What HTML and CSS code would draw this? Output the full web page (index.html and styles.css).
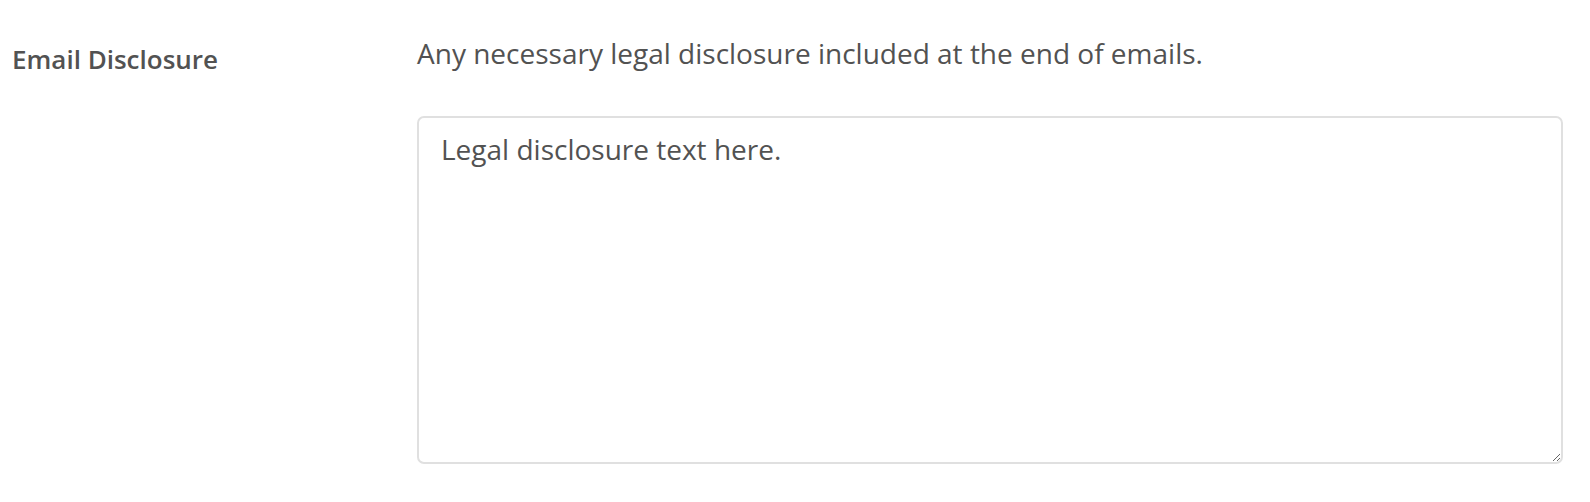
FILE: index.html
```html
<!DOCTYPE html>
<html>
<head>
<meta charset="utf-8">
<link rel="stylesheet" href="styles.css">
</head>
<body>
<div class="row">
  <div class="label">Email Disclosure</div>
  <div class="field">
    <p class="help">Any necessary legal disclosure included at the end of emails.</p>
    <textarea class="input">Legal disclosure text here.</textarea>
  </div>
</div>
</body>
</html>
```
FILE: styles.css
```css
html, body {
  margin: 0;
  padding: 0;
  background: #fff;
}
body {
  font-family: "Open Sans", "Liberation Sans", sans-serif;
  color: #555;
}
.row {
  display: flex;
  padding: 33px 27px 0 12px;
}
.label {
  width: 405px;
  flex: none;
  font-size: 26px;
  line-height: 40px;
  font-weight: 600;
  padding-top: 6px;
  color: #525252;
}
.field {
  flex: 1;
  display: flex;
  flex-direction: column;
}
.help {
  margin: 0;
  font-size: 28px;
  line-height: 40px;
  color: #525252;
}
.input {
  margin-top: 43px;
  height: 348px;
  box-sizing: border-box;
  border: 2px solid #e0e0e0;
  border-radius: 7px;
  padding: 11px 22px;
  font-family: "Open Sans", "Liberation Sans", sans-serif;
  font-size: 28px;
  line-height: 40px;
  color: #525252;
  resize: vertical;
  outline: none;
}
```
